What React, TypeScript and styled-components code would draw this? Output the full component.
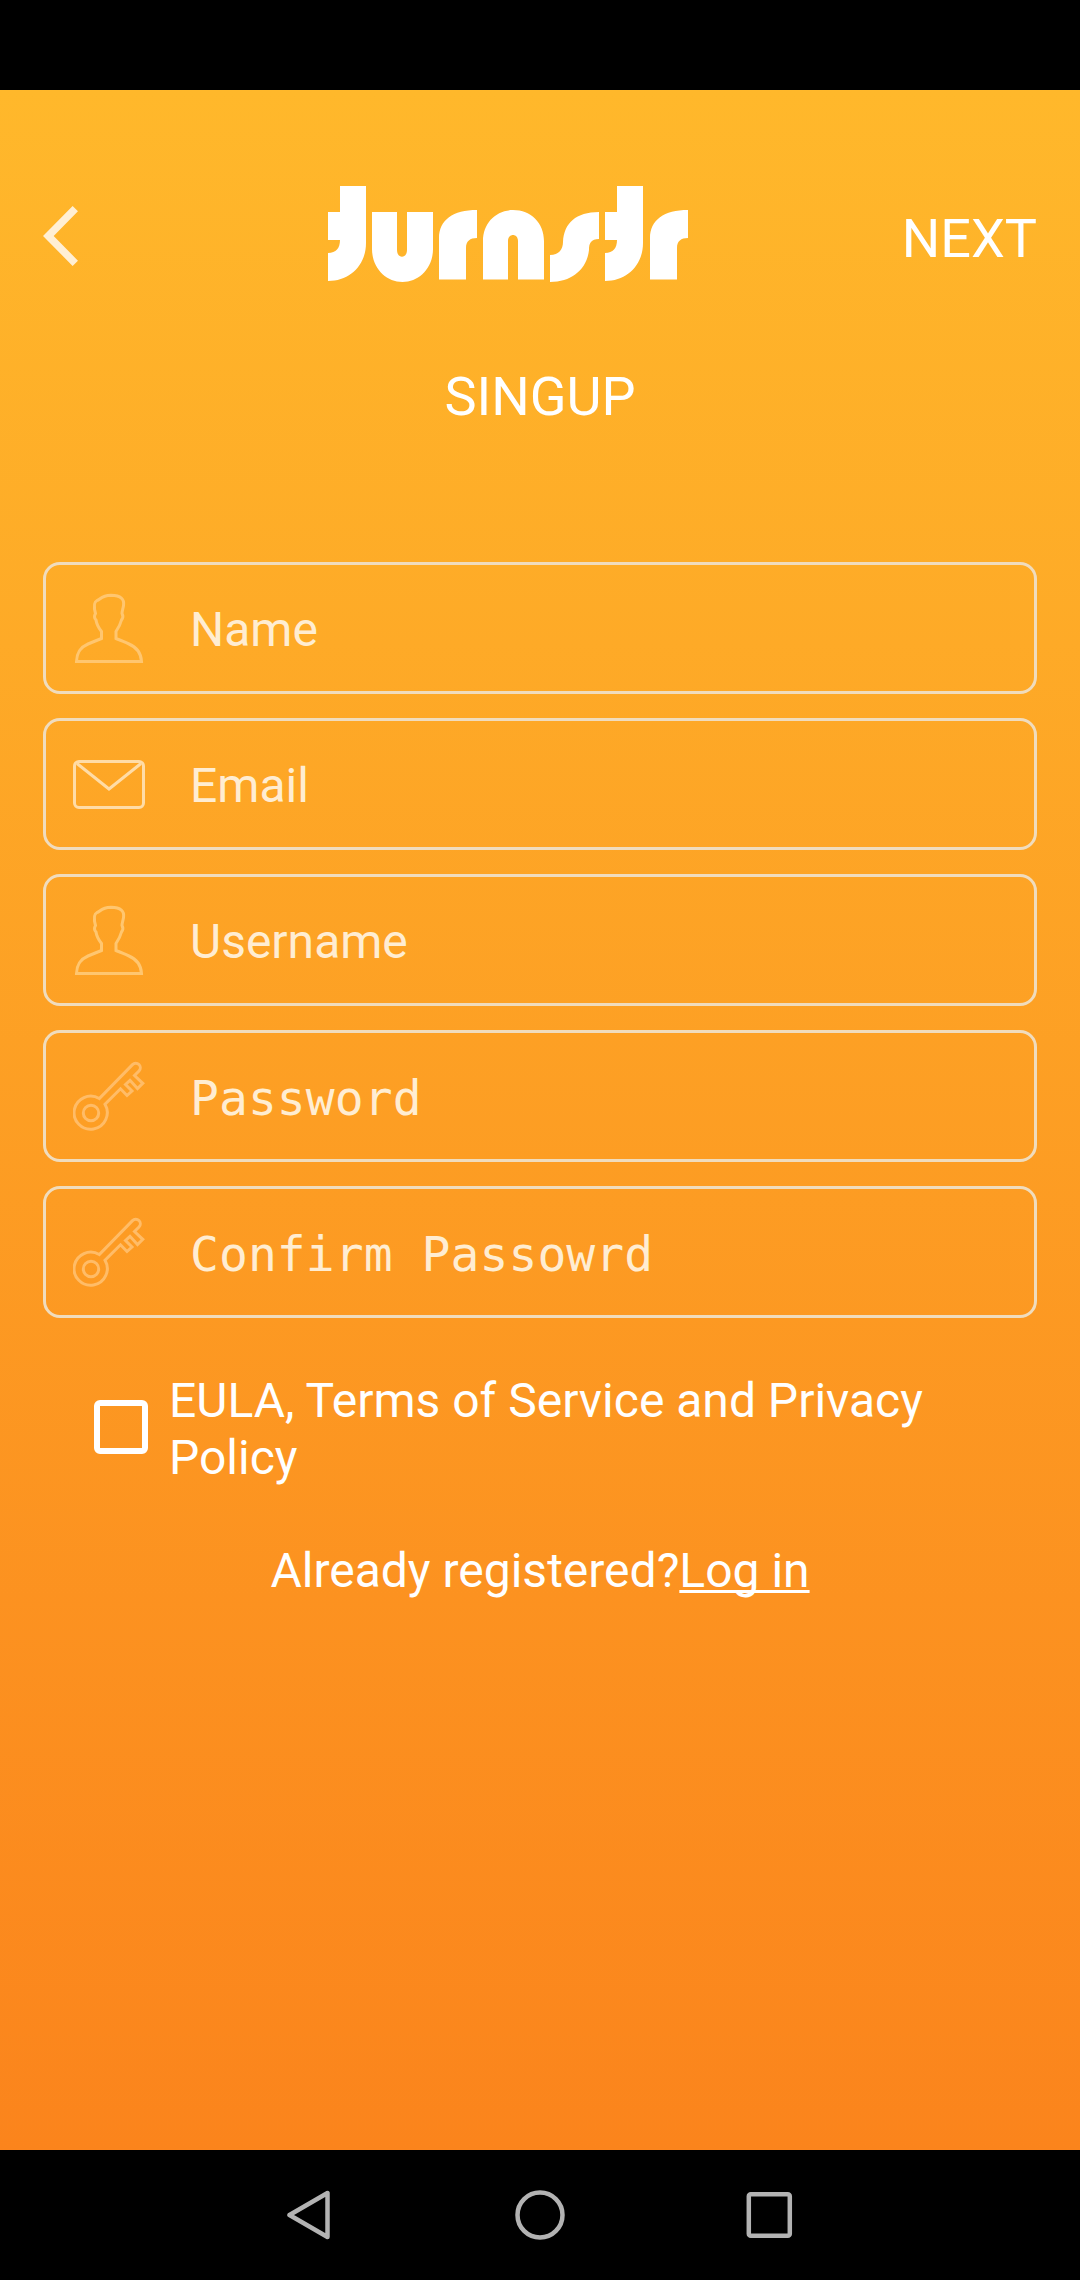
import React from "react";
import styled, { createGlobalStyle } from "styled-components";

const GlobalStyle = createGlobalStyle`
  * { box-sizing: border-box; }
  body { margin: 0; background: #000; font-family: Roboto, "Noto Sans", sans-serif; }
`;

const Screen = styled.div`
  width: 1080px;
  height: 2280px;
  display: flex;
  flex-direction: column;
  background: #000;
`;

const StatusBar = styled.div`
  height: 90px;
  flex: none;
`;

const Page = styled.main`
  height: 2060px;
  flex: none;
  display: flex;
  flex-direction: column;
  background: linear-gradient(180deg, #ffb82b 0%, #fb841c 100%);
  color: #fff;
`;

const Header = styled.header`
  height: 205px;
  padding: 96px 43px 0;
  display: flex;
  justify-content: space-between;
  align-items: flex-start;
`;

const BackButton = styled.button`
  padding: 20px 0 0;
  border: 0;
  background: none;
  display: flex;
`;

const Logo = styled.svg`
  display: block;
  margin-left: 36px;
`;

const NextButton = styled.button`
  margin: 0;
  padding: 21px 0 0;
  border: 0;
  background: none;
  color: #fff;
  font: 400 54px/64px Roboto, sans-serif;
`;

const Title = styled.h1`
  margin: 70px 0 0;
  font: 400 54px/64px Roboto, sans-serif;
  text-align: center;
`;

const Form = styled.form`
  margin: 133px 43px 0;
  display: flex;
  flex-direction: column;
  gap: 24px;
`;

const Field = styled.label`
  height: 132px;
  padding: 0 27px;
  display: flex;
  align-items: center;
  gap: 45px;
  border: 3px solid #f0dcbd;
  border-radius: 17px;
`;

const Placeholder = styled.span<{ $mono?: boolean }>`
  padding-top: ${(p) => (p.$mono ? 4 : 3)}px;
  color: #ffedd2;
  font-family: ${(p) => (p.$mono ? '"DejaVu Sans Mono", monospace' : "Roboto, sans-serif")};
  font-size: 48px;
  letter-spacing: ${(p) => (p.$mono ? "0.05px" : "0")};
  line-height: 57px;
`;

const Terms = styled.div`
  margin: 54px 94px 0;
  display: flex;
  align-items: flex-start;
  gap: 21px;
  font-size: 48px;
  line-height: 57px;
`;

const Checkbox = styled.span`
  width: 54px;
  height: 54px;
  flex: none;
  margin-top: 28px;
  border: 6px solid #fff;
  border-radius: 6px;
`;

const Login = styled.p`
  margin: 56px 0 0;
  text-align: center;
  font-size: 48px;
  line-height: 57px;
`;

const LoginLink = styled.a`
  text-decoration: underline;
  text-decoration-thickness: 3px;
  text-decoration-skip-ink: none;
  text-underline-offset: 3px;
`;

const NavBar = styled.nav`
  height: 130px;
  padding: 0 286px;
  flex: none;
  display: flex;
  justify-content: space-between;
  align-items: center;
`;

const PersonIcon = () => (
  <svg width="72" height="72" viewBox="0 0 72 72" fill="none" stroke="#ffc66f" strokeWidth="3">
    <path d="M3.500 69.500C4 59.500 8 55 15 52C21 49.500 26 47.500 28.500 46.500V39.500C25 35 23.500 32 23 28C21 26 21 24 22.500 21.500C21 16 20 10.500 24 8.500C27 8 28 3.500 38 3.300C48 3.500 51.500 7 50.500 13.500C50 17 49 19 49 21.500C50.500 24 50 26 48.500 28C47.500 32 46 35 43 39.500V46.500C46 47.500 50 49.500 56 52C63 55 68 59.500 68.500 69.500Z" />
  </svg>
);

const MailIcon = () => (
  <svg width="72" height="72" viewBox="0 0 72 72" fill="none" stroke="#ffdca6" strokeWidth="3">
    <rect x="1.500" y="13.500" width="69" height="46" rx="4.500" />
    <path d="M4 15.500L36 41L68 15.500" />
  </svg>
);

const KeyIcon = () => (
  <svg width="72" height="72" viewBox="0 0 72 72" fill="none" stroke="#ffbc67" strokeWidth="3">
    <circle cx="18" cy="53" r="7.700" />
    <path d="M26.300 38.500A16.600 16.600 0 1 0 32 44.300L47.500 28.800L54 35.500L59 31L52.500 24.500L57 20.300L64.500 28.500L69.800 23.300L61.500 15.500L66 11A4.500 4.500 0 0 0 59.500 4.600Z" />
  </svg>
);

const fields = [
  { label: "Name", icon: <PersonIcon /> },
  { label: "Email", icon: <MailIcon /> },
  { label: "Username", icon: <PersonIcon /> },
  { label: "Password", icon: <KeyIcon />, mono: true },
  { label: "Confirm Passowrd", icon: <KeyIcon />, mono: true },
];

export default function App() {
  return (
    <Screen>
      <GlobalStyle />
      <StatusBar />
      <Page>
        <Header>
          <BackButton aria-label="Back">
            <svg width="36" height="60" viewBox="0 0 36 60" fill="none" stroke="#ffefd4" strokeWidth="7.500">
              <path d="M32.300 2.700L5.300 30L32.300 57.300" />
            </svg>
          </BackButton>
          <Logo width="360" height="97" viewBox="0 0 360 97" fill="#fff" aria-label="turnstr">
            <defs>
              <path id="hook" d="M12 0H38V57C38 79 22 95 0 95V67C8 67 12 62 12 54H0V26H12Z" />
              <path id="arch" d="M0 93.500V52C0 34 14 24 38 24V52C31 52 27 55 27 62V93.500Z" />
            </defs>
            <use href="#hook" />
            <path d="M44 26H69V64C69 73 79 73 79 64V26H105V63C105 82 91 96 74.500 96C58 96 44 82 44 63Z" />
            <use href="#arch" x="111" />
            <path d="M155 93.500V55C155 37 168 24 185 24C203 24 216 37 216 55V93.500H190V55C190 47 180 47 180 55V93.500Z" />
            <path d="M222 69C231 69 235 63 235 56C236 37 248 26 271 26V53C263 53 261 57 261 64C259 83 244 96 222 96Z" />
            <use href="#hook" x="277" />
            <use href="#arch" x="322" />
          </Logo>
          <NextButton>NEXT</NextButton>
        </Header>
        <Title>SINGUP</Title>
        <Form>
          {fields.map((f) => (
            <Field key={f.label}>
              {f.icon}
              <Placeholder $mono={f.mono}>{f.label}</Placeholder>
            </Field>
          ))}
        </Form>
        <Terms>
          <Checkbox />
          <span>EULA, Terms of Service and Privacy Policy</span>
        </Terms>
        <Login>
          Already registered?<LoginLink>Log in</LoginLink>
        </Login>
      </Page>
      <NavBar>
        <svg width="48" height="50" viewBox="0 0 48 50" fill="none" stroke="#b3b3b3" strokeWidth="4.500" strokeLinejoin="round">
          <path d="M41.500 3V47L3.500 25Z" />
        </svg>
        <svg width="50" height="50" viewBox="0 0 50 50" fill="none" stroke="#b3b3b3" strokeWidth="4.500">
          <circle cx="25" cy="25" r="22.500" />
        </svg>
        <svg width="48" height="50" viewBox="0 0 48 50" fill="none" stroke="#b3b3b3" strokeWidth="4.500">
          <rect x="2.800" y="4.300" width="41" height="41.500" rx="2" />
        </svg>
      </NavBar>
    </Screen>
  );
}
